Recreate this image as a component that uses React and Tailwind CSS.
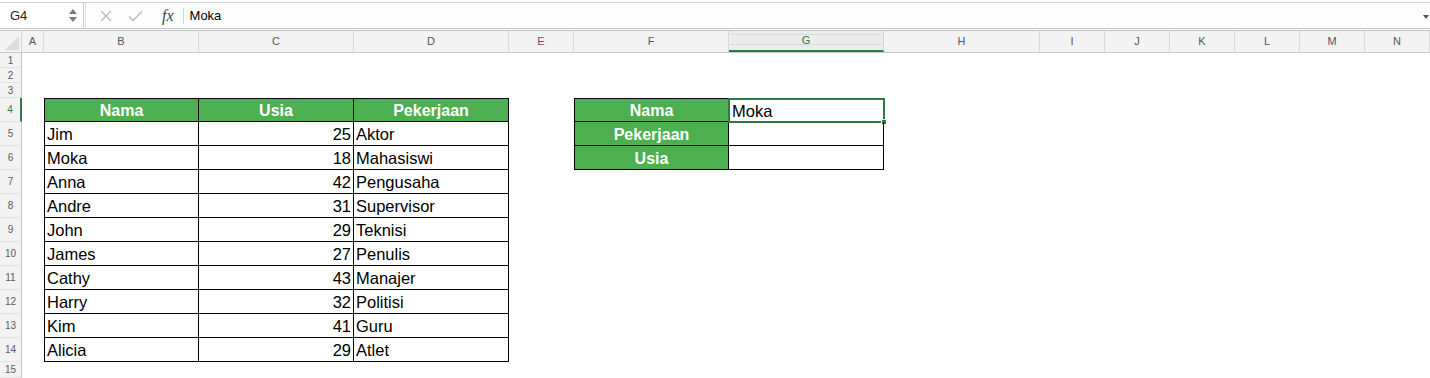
import React from "react";

const cols = [
  { k: "A", w: "w-[22px]" },
  { k: "B", w: "w-[155px]" },
  { k: "C", w: "w-[155px]" },
  { k: "D", w: "w-[155px]" },
  { k: "E", w: "w-[65px]" },
  { k: "F", w: "w-[155px]" },
  { k: "G", w: "w-[155px]" },
  { k: "H", w: "w-[156px]" },
  { k: "I", w: "w-[65px]" },
  { k: "J", w: "w-[65px]" },
  { k: "K", w: "w-[65px]" },
  { k: "L", w: "w-[65px]" },
  { k: "M", w: "w-[65px]" },
  { k: "N", w: "w-[65px]" },
];

const data = [
  ["Jim", 25, "Aktor"],
  ["Moka", 18, "Mahasiswi"],
  ["Anna", 42, "Pengusaha"],
  ["Andre", 31, "Supervisor"],
  ["John", 29, "Teknisi"],
  ["James", 27, "Penulis"],
  ["Cathy", 43, "Manajer"],
  ["Harry", 32, "Politisi"],
  ["Kim", 41, "Guru"],
  ["Alicia", 29, "Atlet"],
];

const lookup = [
  ["Nama", "Moka"],
  ["Pekerjaan", ""],
  ["Usia", ""],
];

function Cell({ col, row }) {
  if (row >= 4 && row <= 14 && (col === "B" || col === "C" || col === "D")) {
    const isHeader = row === 4;
    const left = col === "B" ? " border-l" : "";
    const top = row === 4 ? " border-t" : "";
    const cls = "border-black border-r border-b" + left + top;
    if (isHeader) {
      const label = col === "B" ? "Nama" : col === "C" ? "Usia" : "Pekerjaan";
      return (
        <div className={cls + " h-full w-full bg-[#4caf50] flex items-center justify-center pt-[2px] text-white font-bold text-[16px]"}>
          {label}
        </div>
      );
    }
    const r = data[row - 5];
    if (col === "B")
      return <div className={cls + " h-full w-full flex items-center pl-[2px] pt-[2px] text-[16.5px] text-black"}>{r[0]}</div>;
    if (col === "C")
      return <div className={cls + " h-full w-full flex items-center justify-end pr-[2px] pt-[2px] text-[16.5px] text-black"}>{r[1]}</div>;
    return <div className={cls + " h-full w-full flex items-center pl-[2px] pt-[2px] text-[16.5px] text-black"}>{r[2]}</div>;
  }
  if (row >= 4 && row <= 6 && (col === "F" || col === "G")) {
    const lr = lookup[row - 4];
    const left = col === "F" ? " border-l" : "";
    const top = row === 4 ? " border-t" : "";
    const cls = "border-black border-r border-b" + left + top;
    if (col === "F")
      return (
        <div className={cls + " h-full w-full bg-[#4caf50] flex items-center justify-center pt-[2px] text-white font-bold text-[16px]"}>
          {lr[0]}
        </div>
      );
    return (
      <div className={cls + " h-full w-full flex items-center pl-[3px] pt-[2px] text-[16.5px] text-black relative"}>
        {lr[1]}
        {row === 4 && (
          <>
            <div className="absolute -left-[1px] -top-[1px] -right-[2px] -bottom-[2px] border-2 border-[#2b7a49] pointer-events-none" />
            <div className="absolute -right-[4px] -bottom-[4px] w-[6px] h-[6px] bg-[#2b7a49] border border-white" />
          </>
        )}
      </div>
    );
  }
  return null;
}

function Body() {
  const rows = [];
  for (let r = 1; r <= 15; r++) {
    const h = r <= 3 ? "h-[15px]" : r === 15 ? "h-[16px]" : "h-[24px]";
    const sel = r === 4;
    rows.push(
      <div key={r} className={"flex " + h}>
        <div
          className={
            "w-[22px] shrink-0 h-full bg-[#f3f3f3] border-b border-[#e2e2e2] flex items-center justify-center text-[10px] " +
            (sel
              ? "text-[#2b7a49] border-r-2 border-r-[#2b7a49]"
              : "text-[#5a5a5a] border-r border-r-[#c6c6c6]")
          }
        >
          {r}
        </div>
        {cols.map((c) => (
          <div key={c.k} className={c.w + " shrink-0 h-full"}>
            <Cell col={c.k} row={r} />
          </div>
        ))}
      </div>
    );
  }
  return <div className="flex flex-col">{rows}</div>;
}

export default function App() {
  return (
    <div className="w-[1430px] h-[378px] overflow-hidden bg-white font-['Liberation_Sans',_Arial,_sans-serif]">
      {/* formula bar */}
      <div className="pt-[2px] bg-white">
        <div className="h-[29px] border-t border-[#d0d0d0] border-b-[3px] border-double border-b-[#c4c4c4] flex items-center bg-[#fdfdfd]">
          <div className="w-[84px] h-full shrink-0 flex items-center justify-between pl-[10px] pr-[6px] border-r border-[#cfcfcf] bg-white">
            <span className="text-[13px] text-[#222]">G4</span>
            <div className="flex flex-col gap-[3px] items-center">
              <svg width="8" height="5" viewBox="0 0 8 5"><path d="M4 0 L8 5 L0 5 Z" fill="#7a7a7a" /></svg>
              <svg width="8" height="5" viewBox="0 0 8 5"><path d="M0 0 L8 0 L4 5 Z" fill="#7a7a7a" /></svg>
            </div>
          </div>
          <div className="w-[2px] h-full border-r border-[#dcdcdc]" />
          <div className="flex items-center ml-[14px] gap-[16px]">
            <svg width="12" height="12" viewBox="0 0 12 12">
              <path d="M1 1 L11 11 M11 1 L1 11" stroke="#b8b8b8" strokeWidth="1.3" fill="none" />
            </svg>
            <svg width="15" height="12" viewBox="0 0 15 12">
              <path d="M1 6.5 L5 10.5 L14 1.5" stroke="#b8b8b8" strokeWidth="1.3" fill="none" />
            </svg>
          </div>
          <span className="ml-[19px] text-[16px] italic text-[#444] font-['Liberation_Serif',_serif] leading-none">fx</span>
          <div className="ml-[9px] w-px h-[16px] bg-[#d4d4d4]" />
          <span className="ml-[6px] text-[13px] text-black">Moka</span>
          <div className="flex-1" />
          <svg width="6" height="4" viewBox="0 0 6 4" className="mr-[1px] mt-[2px]">
            <path d="M0 0 L6 0 L3 4 Z" fill="#555" />
          </svg>
        </div>
      </div>
      {/* column headers */}
      <div className="flex h-[22px] bg-[#f3f3f3] border-b border-[#c6c6c6]">
        <div className="w-[22px] shrink-0 h-full border-r border-[#d4d4d4] relative overflow-hidden">
          <svg width="22" height="22" viewBox="0 0 22 22" className="absolute inset-0">
            <path d="M19 5 L19 19 L5 19 Z" fill="#dcdcdc" />
          </svg>
        </div>
        {cols.map((c) =>
          c.k === "G" ? (
            <div
              key={c.k}
              className={c.w + " shrink-0 h-full relative border-r border-[#d4d4d4] border-b-2 border-b-[#2b7a49] flex items-center justify-center text-[11px] text-[#2b7a49] bg-[#ececec]"}
            >
              <div className="absolute left-[2px] right-[2px] top-[3px] bottom-[5px] border-y border-dotted border-[#c9c9c9]" />
              <span className="relative">G</span>
            </div>
          ) : (
            <div
              key={c.k}
              className={c.w + " shrink-0 h-full border-r border-[#dadada] flex items-center justify-center text-[11px] text-[#555]"}
            >
              {c.k}
            </div>
          )
        )}
      </div>
      <Body />
    </div>
  );
}
